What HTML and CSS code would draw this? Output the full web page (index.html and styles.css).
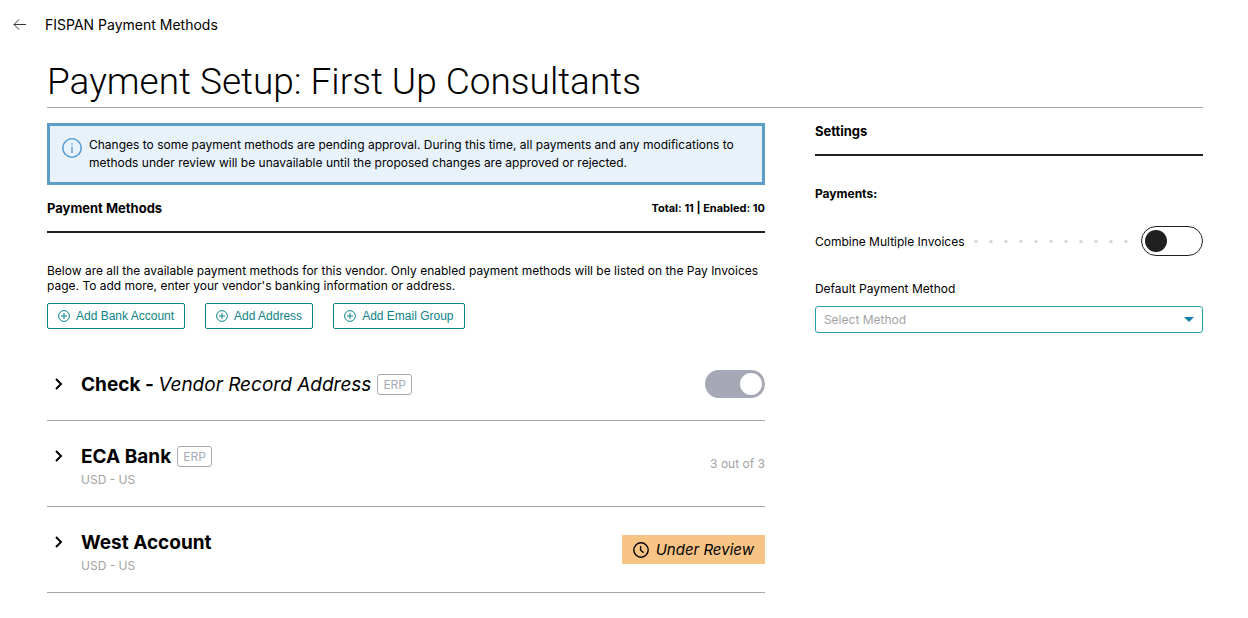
FILE: index.html
```html
<!DOCTYPE html>
<html lang="en">
<head>
<meta charset="utf-8">
<meta name="viewport" content="width=device-width, initial-scale=1">
<title>Payment Setup: First Up Consultants</title>
<link rel="stylesheet" href="styles.css">
</head>
<body>
<header class="topbar">
  <a class="back" href="#" aria-label="Back">
    <svg width="14" height="12" viewBox="0 0 14 12" fill="none" stroke="#333" stroke-width="1"><path d="M13 5.5H1M6 .5l-5 5 5 5"/></svg>
  </a>
  <span class="topbar-title">FISPAN Payment Methods</span>
</header>
<main class="page">
  <h1 class="title">Payment Setup: First Up Consultants</h1>
  <div class="columns">
    <section>
      <div class="notice">
        <svg class="notice-icon" width="20" height="20" viewBox="0 0 20 20" fill="none" stroke="#5b9fd0" stroke-width="1.6"><circle cx="10" cy="10" r="9.2"/><path d="M10 8.5V15M10 5.2v1.6" stroke-width="1.4"/></svg>
        <p class="notice-text">Changes to some payment methods are pending approval. During this time, all payments and any modifications to methods under review will be unavailable until the proposed changes are approved or rejected.</p>
      </div>
      <div class="section-head">
        <h2 class="heading">Payment Methods</h2>
        <span class="totals">Total: 11 | Enabled: 10</span>
      </div>
      <p class="intro">Below are all the available payment methods for this vendor. Only enabled payment methods will be listed on the Pay Invoices page. To add more, enter your vendor's banking information or address.</p>
      <div class="actions">
        <button class="add" type="button"><svg width="12" height="12" viewBox="0 0 12 12" fill="none" stroke="currentColor"><circle cx="6" cy="6" r="5.4"/><path d="M6 3v6M3 6h6"/></svg>Add Bank Account</button>
        <button class="add" type="button"><svg width="12" height="12" viewBox="0 0 12 12" fill="none" stroke="currentColor"><circle cx="6" cy="6" r="5.4"/><path d="M6 3v6M3 6h6"/></svg>Add Address</button>
        <button class="add" type="button"><svg width="12" height="12" viewBox="0 0 12 12" fill="none" stroke="currentColor"><circle cx="6" cy="6" r="5.4"/><path d="M6 3v6M3 6h6"/></svg>Add Email Group</button>
      </div>
      <ul class="methods">
        <li class="method">
          <button class="expand" type="button" aria-label="Expand Check"><svg width="8" height="12" viewBox="0 0 8 12" fill="none" stroke="#000" stroke-width="2"><path d="m1 1 5 5-5 5"/></svg></button>
          <div class="method-main">
            <h3 class="method-name">Check - <em class="method-detail">Vendor Record Address</em><span class="tag">ERP</span></h3>
          </div>
          <input class="switch switch-locked" type="checkbox" role="switch" aria-label="Enable Check" checked disabled>
        </li>
        <li class="method">
          <button class="expand" type="button" aria-label="Expand ECA Bank"><svg width="8" height="12" viewBox="0 0 8 12" fill="none" stroke="#000" stroke-width="2"><path d="m1 1 5 5-5 5"/></svg></button>
          <div class="method-main">
            <h3 class="method-name">ECA Bank<span class="tag">ERP</span></h3>
            <p class="muted currency">USD - US</p>
          </div>
          <span class="muted">3 out of 3</span>
        </li>
        <li class="method">
          <button class="expand" type="button" aria-label="Expand West Account"><svg width="8" height="12" viewBox="0 0 8 12" fill="none" stroke="#000" stroke-width="2"><path d="m1 1 5 5-5 5"/></svg></button>
          <div class="method-main">
            <h3 class="method-name">West Account</h3>
            <p class="muted currency">USD - US</p>
          </div>
          <span class="review"><svg width="16" height="16" viewBox="0 0 16 16" fill="none" stroke="#000" stroke-width="1.4"><circle cx="8" cy="8" r="7.2"/><path d="M7.6 4v4.2l3 2.4"/></svg>Under Review</span>
        </li>
      </ul>
    </section>
    <aside>
      <div class="section-head">
        <h2 class="heading">Settings</h2>
      </div>
      <h3 class="subheading">Payments:</h3>
      <div class="setting">
        <label for="combine">Combine Multiple Invoices</label>
        <span class="leader"></span>
        <input class="switch" type="checkbox" role="switch" id="combine">
      </div>
      <label class="field-label" for="method">Default Payment Method</label>
      <div class="select-box">
        <select class="select" id="method"><option>Select Method</option></select>
        <svg class="caret" width="10" height="5" viewBox="0 0 10 5"><path d="M0 0h10L5 5z" fill="#147fa8"/></svg>
      </div>
    </aside>
  </div>
</main>
</body>
</html>
```
FILE: styles.css
```css
* { box-sizing: border-box; }
body, h1, h2, h3, p, ul { margin: 0; padding: 0; }
body {
  background: #fff;
  color: #000;
  font: 12px/15px Inter, "Liberation Sans", sans-serif;
}
button, select { font: inherit; }
svg { display: block; flex: none; }

.topbar {
  display: flex;
  align-items: center;
  gap: 18px;
  height: 50px;
  padding-left: 13px;
}
.topbar-title { font-size: 14px; line-height: 20px; }

.page { padding: 0 45px 24px 47px; }
.title {
  padding: 8px 0 1px;
  border-bottom: 1px solid #a6a6a6;
  font-family: Roboto, Inter, sans-serif;
  font-size: 37px;
  font-weight: 300;
  line-height: 48px;
}
.columns {
  display: grid;
  grid-template-columns: 37fr 20fr;
  gap: 50px;
  padding-top: 15px;
}

.notice {
  display: flex;
  gap: 7px;
  margin-bottom: 15px;
  padding: 10px 12px;
  border: 3px solid #5b9fc9;
  background: #e8f2fb;
}
.notice-icon { margin-top: 2px; }
.notice-text { line-height: 18px; }

.section-head {
  display: flex;
  align-items: center;
  justify-content: space-between;
  padding-bottom: 14px;
  border-bottom: 2px solid #202020;
}
.heading { font-size: 13px; font-weight: 700; line-height: 17px; }
.totals { font-size: 11px; font-weight: 700; }
.intro { padding: 30px 0 10px; }

.actions { display: flex; gap: 20px; }
.add {
  display: flex;
  align-items: center;
  gap: 6px;
  height: 26px;
  padding: 0 10px;
  border: 1px solid #0d8387;
  border-radius: 2px;
  background: #fff;
  color: #0d8387;
  font-family: "Liberation Sans", sans-serif;
}

.methods { padding-top: 20px; list-style: none; }
.method {
  display: flex;
  align-items: center;
  padding: 18px 0;
  border-bottom: 1px solid #a6a6a6;
}
.expand {
  align-self: flex-start;
  width: 34px;
  padding: 11px 8px;
  border: 0;
  background: none;
}
.method-main { flex: 1; align-self: flex-start; }
.method-name {
  display: flex;
  align-items: center;
  padding-top: 1px;
  font-size: 19px;
  font-weight: 700;
  line-height: 34px;
  white-space: pre;
}
.method-detail { font-weight: 400; }
.tag {
  margin: 0 0 2px 6px;
  padding: 0 5px;
  border: 1px solid #a8abb5;
  border-radius: 3px;
  color: #a8abb5;
  font-size: 12px;
  font-weight: 400;
  line-height: 19px;
}
.muted { color: #a3a3a3; }
.currency { padding-bottom: 3px; line-height: 11px; }
.review {
  display: flex;
  align-items: center;
  gap: 7px;
  padding: 0 11px;
  background: #f8c486;
  font-size: 15px;
  font-style: italic;
  line-height: 29px;
}

.switch {
  display: flex;
  align-items: center;
  flex: none;
  appearance: none;
  width: 62px;
  height: 30px;
  margin: 0;
  padding: 0 3px;
  border: 1px solid #202020;
  border-radius: 15px;
  background: #fff;
}
.switch::before {
  width: 22px;
  height: 22px;
  border-radius: 50%;
  background: #202020;
  content: "";
}
.switch:checked { justify-content: flex-end; }
.switch-locked {
  width: 60px;
  height: 28px;
  border: 0;
  background: #a6a9b5;
  align-self: flex-start;
  margin-top: 3px;
}
.switch-locked::before { background: #fff; }

.subheading { padding: 30px 0 25px; font-size: 12px; font-weight: 700; }
.setting { display: flex; align-items: center; }
.leader {
  flex: 1;
  height: 3px;
  margin: 0 8px;
  background: radial-gradient(circle, #d0d0d0 1px, transparent 2px) right / 15px 3px repeat-x;
}
.field-label { display: block; padding: 25px 0 10px; }
.select-box { display: grid; align-items: center; }
.select {
  grid-area: 1 / 1;
  appearance: none;
  width: 100%;
  height: 27px;
  padding: 0 24px 0 8px;
  border: 1px solid #27a0ad;
  border-radius: 3px;
  background: #fff;
  color: #a3a3a3;
}
.caret {
  grid-area: 1 / 1;
  justify-self: end;
  margin-right: 9px;
  pointer-events: none;
}
```
